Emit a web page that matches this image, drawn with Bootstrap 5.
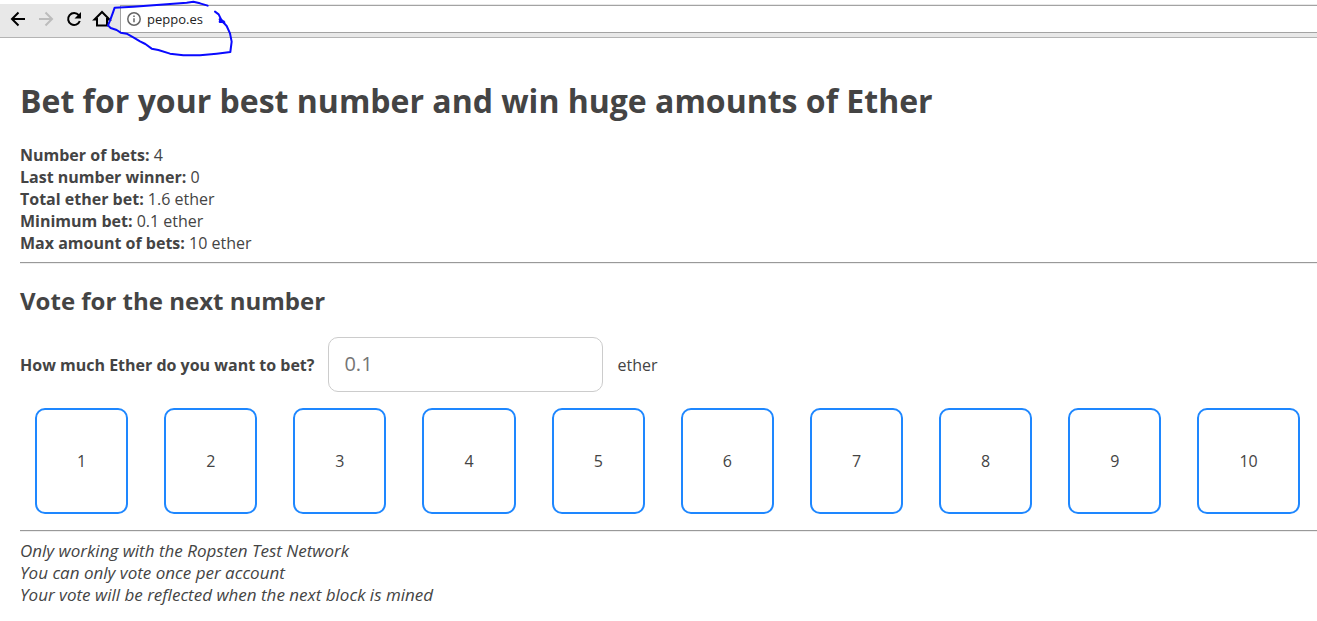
<!DOCTYPE html>
<html lang="en">
<head>
<meta charset="utf-8">
<meta name="viewport" content="width=device-width, initial-scale=1">
<title>Ether number betting</title>
<link href="https://cdn.jsdelivr.net/npm/bootstrap@5.3.0/dist/css/bootstrap.min.css" rel="stylesheet">
<style>
  body { font-family: "Open Sans", sans-serif; font-size: 16px; line-height: 22px; color: #444; background: #fff; }
  h1, h2 { font-weight: 700; color: #444; }
  h1 { font-size: 32px; line-height: 44px; }
  h2 { font-size: 24px; line-height: 34px; }
  .browser-bar { height: 34px; background: #e8e8e8; border-bottom: 1px solid #b4b4b4; padding: 1px 0 0 4px; }
  .tool-btn { width: 28px; height: 28px; padding: 0; border: 0; background: none; color: #000; }
  .tool-btn svg { display: block; margin: 4px; }
  .tool-btn:disabled { color: #bcbcbc; }
  .address-box { height: 28px; margin-left: 4px; background: #fff; border: 1px solid #a3a3a3; border-right: 0; padding-left: 5px; gap: 5px; }
  .address-box input { border: 0; padding: 0; outline: 0; font-size: 13px; line-height: 18px; color: #222; background: none; }
  .pen-mark { left: 100px; top: 0; pointer-events: none; }
  main { padding: 41px 0 15px 20px; }
  .stats { margin-top: 21px; }
  .rule { margin: 8px 0; border: 0; border-top: 1px solid #999; border-bottom: 1px solid #eee; opacity: 1; }
  .vote-title { margin: 20px 0 0; }
  .bet-field { width: 275px; height: 55px; border: 1px solid #ccc; border-radius: 10px; padding: 0 15px 2px; font-size: 20px; color: #444; }
  .bet-field::placeholder { color: #757575; }
  .bet-row { gap: 14px; margin: 19px 0 16px; }
  .numbers { gap: 16px 36px; padding: 0 15px; margin-bottom: 16px; }
  .number-btn { padding: 40px; line-height: 22px; border: 2px solid #1e87ff; border-radius: 10px; background: #fff; color: #444; }
  .number-btn:hover { background: #1e87ff; color: #fff; }
  .notes { font-size: 17px; }
</style>
</head>
<body>
<header class="position-relative pt-1">
  <div class="browser-bar d-flex align-items-start">
    <button class="tool-btn" type="button" aria-label="Back"><svg width="20" height="20" viewBox="0 0 20 20" fill="none" stroke="currentColor" stroke-width="2"><path d="M17 10H4.500M10.500 3.500L4 10l6.500 6.500"/></svg></button>
    <button class="tool-btn" type="button" aria-label="Forward" disabled><svg width="20" height="20" viewBox="0 0 20 20" fill="none" stroke="currentColor" stroke-width="2"><path d="M3 10h12.500M9.500 3.500L16 10l-6.500 6.500"/></svg></button>
    <button class="tool-btn" type="button" aria-label="Reload"><svg width="20" height="20" viewBox="0 0 20 20" fill="none" stroke="currentColor" stroke-width="2"><path d="M14.800 6.200A6 6 0 1 0 15.800 12"/><path d="M17 3v6.500h-6.500z" fill="currentColor" stroke="none"/></svg></button>
    <button class="tool-btn" type="button" aria-label="Home"><svg width="20" height="20" viewBox="0 0 20 20" fill="none" stroke="currentColor" stroke-width="2"><path d="M4.500 10.500H2.500L10 3l7.500 7.500h-2M5 9v7.500h10V9"/></svg></button>
    <div class="address-box d-flex align-items-center flex-grow-1">
      <svg width="16" height="16" viewBox="0 0 16 16" fill="none" stroke="#666" stroke-width="1.500"><circle cx="8" cy="8" r="6.200"/><path d="M8 7.200v4M8 4.400v1.600"/></svg>
      <input class="flex-grow-1" type="text" value="peppo.es" aria-label="Address" spellcheck="false">
    </div>
  </div>
  <svg class="pen-mark position-absolute" width="140" height="62" viewBox="300 0 420 186" fill="none" stroke="#0a0aff" stroke-width="6" stroke-linecap="round" stroke-linejoin="round" aria-hidden="true">
    <path d="M623 17L600 10L580 5L560 8L520 11L470 15L400 20L344 23L338 40L330 62L324 76L332 84L350 90L362 98L380 101L400 112L420 124L436 132L455 146L475 150L510 161L550 166L600 166L650 161L691 156L695 125L690 100L680 78L665 62L656 43L645 35"/>
    <path d="M660 58l12 9M660 65h10" stroke-width="8"/>
  </svg>
</header>
<main>
  <h1 class="mb-0">Bet for your best number and win huge amounts of Ether</h1>
  <div class="stats">
    <div><b>Number of bets:</b> <span>4</span></div>
    <div><b>Last number winner:</b> <span>0</span></div>
    <div><b>Total ether bet:</b> <span>1.6 ether</span></div>
    <div><b>Minimum bet:</b> <span>0.1 ether</span></div>
    <div><b>Max amount of bets:</b> <span>10 ether</span></div>
  </div>
  <hr class="rule">
  <h2 class="vote-title">Vote for the next number</h2>
  <div class="bet-row d-flex flex-wrap align-items-center">
    <label class="fw-bold" for="bet">How much Ether do you want to bet?</label>
    <input class="bet-field" id="bet" type="text" inputmode="decimal" placeholder="0.1">
    <span>ether</span>
  </div>
  <div class="numbers d-flex flex-wrap">
    <button class="number-btn" type="button">1</button>
    <button class="number-btn" type="button">2</button>
    <button class="number-btn" type="button">3</button>
    <button class="number-btn" type="button">4</button>
    <button class="number-btn" type="button">5</button>
    <button class="number-btn" type="button">6</button>
    <button class="number-btn" type="button">7</button>
    <button class="number-btn" type="button">8</button>
    <button class="number-btn" type="button">9</button>
    <button class="number-btn" type="button">10</button>
  </div>
  <hr class="rule">
  <div class="notes fst-italic">
    <div>Only working with the Ropsten Test Network</div>
    <div>You can only vote once per account</div>
    <div>Your vote will be reflected when the next block is mined</div>
  </div>
</main>
<script src="https://cdn.jsdelivr.net/npm/bootstrap@5.3.0/dist/js/bootstrap.bundle.min.js"></script>
</body>
</html>
